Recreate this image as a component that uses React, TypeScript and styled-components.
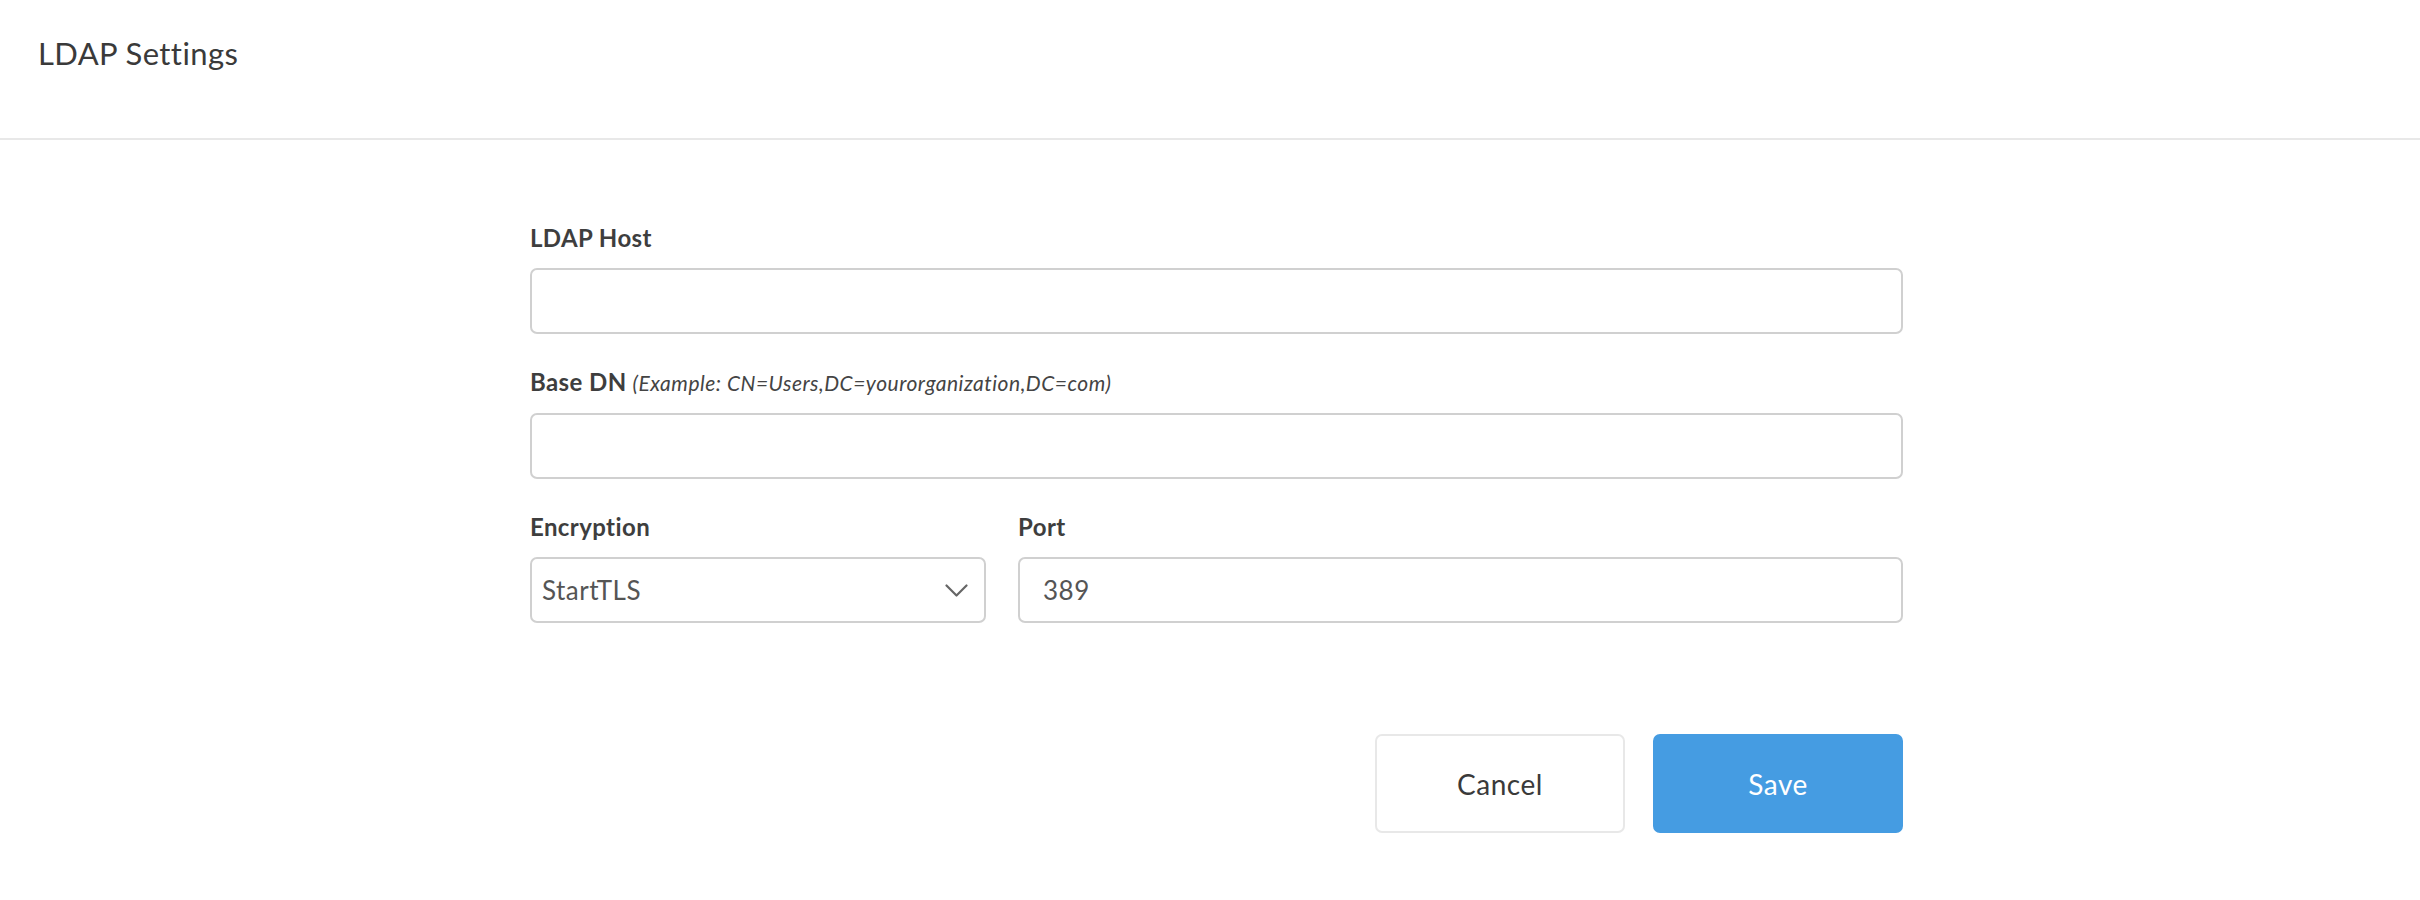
import React from "react";
import styled, { createGlobalStyle } from "styled-components";

const GlobalStyle = createGlobalStyle`
  html, body {
    margin: 0;
    padding: 0;
    background: #ffffff;
    font-family: Lato, "Open Sans", "Liberation Sans", sans-serif;
    color: #3c3c3c;
  }
  * { box-sizing: border-box; }
`;

const Page = styled.div`
  width: 100%;
  min-height: 900px;
  background: #ffffff;
`;

const Header = styled.header`
  height: 140px;
  padding: 35px 0 0 38px;
  border-bottom: 2px solid #e8e8e8;
`;

const Title = styled.h1`
  margin: 0;
  font-size: 31px;
  line-height: 37px;
  font-weight: 400;
  letter-spacing: 0.4px;
  color: #3a3a3a;
`;

const Form = styled.form`
  width: 1373px;
  margin-left: 530px;
  padding-top: 83px;
  display: flex;
  flex-direction: column;
  gap: 33px;
`;

const Row = styled.div`
  display: grid;
  grid-template-columns: 456px 1fr;
  column-gap: 32px;
`;

const Field = styled.div`
  display: flex;
  flex-direction: column;
`;

const Label = styled.label`
  display: block;
  font-size: 24px;
  line-height: 29px;
  font-weight: 700;
  letter-spacing: 0.4px;
  color: #3e3e3e;
  margin-bottom: 16px;
  white-space: nowrap;
`;

const Hint = styled.span`
  font-size: 21px;
  font-style: italic;
  font-weight: 400;
  letter-spacing: 0.5px;
  color: #444;
  margin-left: 6px;
`;

const Input = styled.input<{ $pad?: number }>`
  width: 100%;
  height: 66px;
  border: 2px solid #d0d0d0;
  border-radius: 7px;
  padding: 0 ${(p) => p.$pad ?? 12}px;
  font-family: inherit;
  font-size: 26px;
  letter-spacing: 0.5px;
  color: #555;
  background: #fff;
  outline: none;
`;

const SelectBox = styled.div`
  height: 66px;
  border: 2px solid #d0d0d0;
  border-radius: 7px;
  padding: 0 10px;
  display: flex;
  align-items: center;
  justify-content: space-between;
  font-size: 26px;
  letter-spacing: 0.5px;
  color: #555;
  background: #fff;
`;

const Chevron = styled.svg`
  width: 23px;
  height: 13px;
  margin-right: 6px;
`;

const Actions = styled.div`
  display: flex;
  justify-content: flex-end;
  gap: 28px;
  margin-top: 78px;
`;

const Button = styled.button<{ $primary?: boolean }>`
  width: 250px;
  height: 99px;
  border-radius: 7px;
  font-family: inherit;
  font-size: 28px;
  font-weight: 400;
  letter-spacing: 0.5px;
  cursor: pointer;
  border: 2px solid ${(p) => (p.$primary ? "#459ce2" : "#e8e8e8")};
  background: ${(p) => (p.$primary ? "#459ce2" : "#ffffff")};
  color: ${(p) => (p.$primary ? "#ffffff" : "#3a3a3a")};
`;

export default function App() {
  return (
    <Page>
      <GlobalStyle />
      <Header>
        <Title>LDAP Settings</Title>
      </Header>
      <Form onSubmit={(e) => e.preventDefault()}>
        <Field>
          <Label>LDAP Host</Label>
          <Input type="text" />
        </Field>
        <Field>
          <Label>
            Base DN<Hint>(Example: CN=Users,DC=yourorganization,DC=com)</Hint>
          </Label>
          <Input type="text" />
        </Field>
        <Row>
          <Field>
            <Label>Encryption</Label>
            <SelectBox>
              <span>StartTLS</span>
              <Chevron viewBox="0 0 23 13" fill="none">
                <path d="M1.5 1.5 L11.5 11.5 L21.5 1.5" stroke="#666" strokeWidth="2.2" strokeLinecap="round" strokeLinejoin="round" />
              </Chevron>
            </SelectBox>
          </Field>
          <Field>
            <Label>Port</Label>
            <Input type="text" defaultValue="389" $pad={23} />
          </Field>
        </Row>
        <Actions>
          <Button type="button">Cancel</Button>
          <Button type="submit" $primary>
            Save
          </Button>
        </Actions>
      </Form>
    </Page>
  );
}
